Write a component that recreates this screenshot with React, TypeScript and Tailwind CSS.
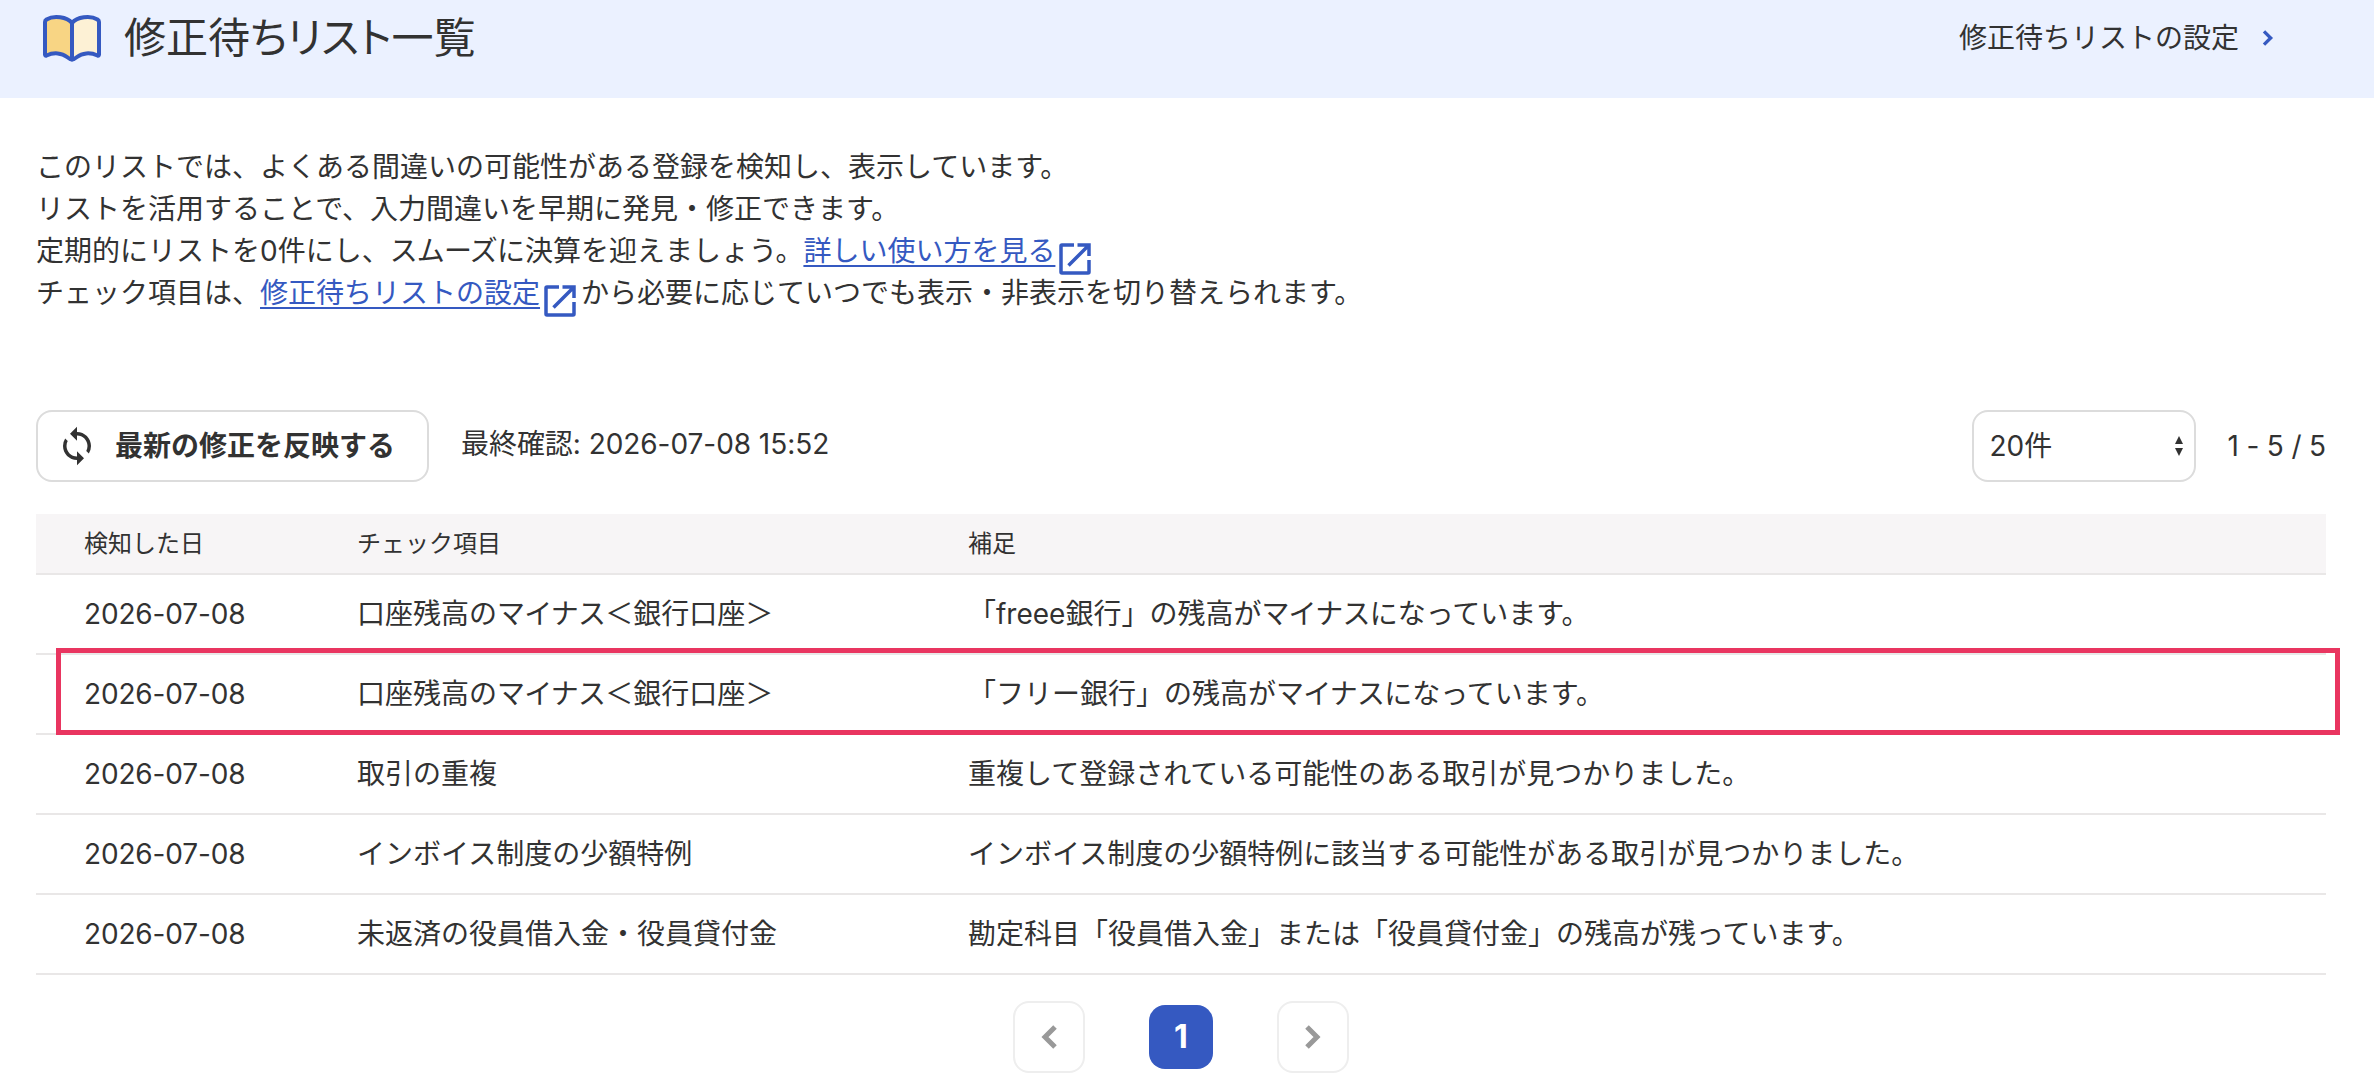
import { MdSync } from "react-icons/md";

type Row = { date: string; item: string; note: string; marked?: boolean };

const ROWS: Row[] = [
  { date: "2026-07-08", item: "口座残高のマイナス＜銀行口座＞", note: "「freee銀行」の残高がマイナスになっています。" },
  { date: "2026-07-08", item: "口座残高のマイナス＜銀行口座＞", note: "「フリー銀行」の残高がマイナスになっています。", marked: true },
  { date: "2026-07-08", item: "取引の重複", note: "重複して登録されている可能性のある取引が見つかりました。" },
  { date: "2026-07-08", item: "インボイス制度の少額特例", note: "インボイス制度の少額特例に該当する可能性がある取引が見つかりました。" },
  { date: "2026-07-08", item: "未返済の役員借入金・役員貸付金", note: "勘定科目「役員借入金」または「役員貸付金」の残高が残っています。" },
];

function BookIcon() {
  return (
    <svg className="w-[60px] h-12 mt-0.5 shrink-0" viewBox="0 0 60 48" fill="none" stroke="#3559c1" strokeWidth="4" strokeLinejoin="round">
      <path d="M30 8C25 2 12 0 4.500 4.500Q3 5.500 3 7V39.500Q3 41 4.500 40.500C12 37 20 38 25 42Q28 44.500 30 44.500Z" fill="#f8d584" />
      <path d="M30 8C35 2 48 0 55.500 4.500Q57 5.500 57 7V39.500Q57 41 55.500 40.500C48 37 40 38 35 42Q32 44.500 30 44.500Z" fill="#fdf1d5" />
    </svg>
  );
}

function ExternalIcon() {
  return (
    <svg className="inline-block w-8 h-8 ml-1 mr-[5px] align-top translate-y-[13px]" viewBox="0 0 32 32" fill="none" stroke="#3559c1" strokeWidth="3.500">
      <path d="M15 2H3Q2 2 2 3V29Q2 30 3 30H29Q30 30 30 29V17" />
      <path d="M18.500 2H30V13M30 2L9.500 22.500" />
    </svg>
  );
}

function Chevron({ dir, className }: { dir: "left" | "right"; className: string }) {
  return (
    <svg className={className} viewBox="0 0 16 24" fill="none" stroke="currentColor" strokeWidth="5">
      <path d={dir === "left" ? "M14 2L4 12L14 22" : "M2 2L12 12L2 22"} />
    </svg>
  );
}

function DocLink({ children }: { children: string }) {
  return (
    <>
      <a href="#" className="text-[#3559c1] underline decoration-2 underline-offset-4">{children}</a>
      <ExternalIcon />
    </>
  );
}

function Tight({ text, word }: { text: string; word: string }) {
  const [before, after] = text.split(word);
  if (after === undefined) return <>{text}</>;
  return <>{before}<span className="tracking-[-0.8px]">{word}</span>{after}</>;
}

export default function App() {
  return (
    <div className="w-full h-[1092px] overflow-hidden bg-white text-[#323232] text-[28px] leading-[42px] font-[Inter,'Noto_Sans_CJK_JP',sans-serif]">
      <header className="h-[98px] bg-[#ebf1ff] flex items-start justify-between pl-[42px] pr-[100px]">
        <div className="flex items-center h-[76px] gap-[22px]">
          <BookIcon />
          <h1 className="text-[42px] font-normal [font-feature-settings:'palt']">修正待ちリスト一覧</h1>
        </div>
        <a href="#" className="flex items-center h-[76px] gap-[23px]">
          修正待ちリストの設定
          <Chevron dir="right" className="w-3 h-4 text-[#3559c1]" />
        </a>
      </header>

      <main className="pl-9 pr-12">
        <div className="pt-12 h-[312px]">
          <p className="h-[42px]">このリストでは、よくある間違いの可能性がある登録を検知し、表示しています。</p>
          <p className="h-[42px]">リストを活用することで、入力間違いを早期に発見・修正できます。</p>
          <p className="h-[42px]"><Tight text="定期的にリストを0件にし、スムーズに決算を迎えましょう。" word="スムーズ" /><DocLink>詳しい使い方を見る</DocLink></p>
          <p className="h-[42px]">チェック項目は、<DocLink>修正待ちリストの設定</DocLink>から必要に応じていつでも表示・非表示を切り替えられます。</p>
        </div>

        <div className="flex items-center h-[72px]">
          <button className="flex items-center h-[72px] w-[393px] pl-[18px] gap-[17px] border-2 border-[#dcdcdc] rounded-2xl font-bold">
            <MdSync className="w-[42px] h-[42px]" />
            最新の修正を反映する
          </button>
          <span className="ml-8 mb-1 tracking-[-0.05px]">最終確認: 2026-07-08 15:52</span>
          <div className="ml-auto flex items-center">
            <button className="flex items-center justify-between w-56 h-[72px] pl-[15px] pr-[11px] border-2 border-[#dcdcdc] rounded-2xl">
              20件
              <svg className="w-2 h-5" viewBox="0 0 8 20" fill="currentColor">
                <path d="M4 0L8 8H0ZM4 20L0 12H8Z" />
              </svg>
            </button>
            <span className="ml-[31px] tracking-[-0.15px]">1 - 5 / 5</span>
          </div>
        </div>

        <table className="mt-8 w-full table-fixed border-separate border-spacing-0 text-left">
          <colgroup>
            <col className="w-[273px]" />
            <col className="w-[611px]" />
            <col />
          </colgroup>
          <thead>
            <tr className="h-[61px] bg-[#f7f5f6] text-2xl">
              {["検知した日", "チェック項目", "補足"].map((h) => (
                <th key={h} className="pl-12 p-0 font-normal border-b-2 border-[#e9e7e7]">{h}</th>
              ))}
            </tr>
          </thead>
          <tbody>
            {ROWS.map((r, i) => (
              <tr key={i} className="h-20 relative">
                <td className="pl-12 p-0 border-b-2 border-[#e9e7e7] tracking-[-0.15px]">
                  {r.date}
                  {r.marked && <span className="absolute left-5 -right-3.5 -top-[7px] h-[87px] border-[5px] border-[#e93560]" />}
                </td>
                <td className="pl-12 p-0 border-b-2 border-[#e9e7e7]"><Tight text={r.item} word="マイナス" /></td>
                <td className="pl-12 p-0 border-b-2 border-[#e9e7e7]"><Tight text={r.note} word="マイナス" /></td>
              </tr>
            ))}
          </tbody>
        </table>

        <nav className="mt-[26px] flex items-center justify-center gap-16">
          <button className="flex items-center justify-center w-[72px] h-[72px] border-2 border-[#eeeeee] rounded-2xl text-[#999999]">
            <Chevron dir="left" className="w-4 h-6" />
          </button>
          <button className="w-16 h-16 rounded-2xl bg-[#3559c1] text-white text-[32px] font-bold">1</button>
          <button className="flex items-center justify-center w-[72px] h-[72px] border-2 border-[#eeeeee] rounded-2xl text-[#999999]">
            <Chevron dir="right" className="w-4 h-6" />
          </button>
        </nav>
      </main>
    </div>
  );
}
